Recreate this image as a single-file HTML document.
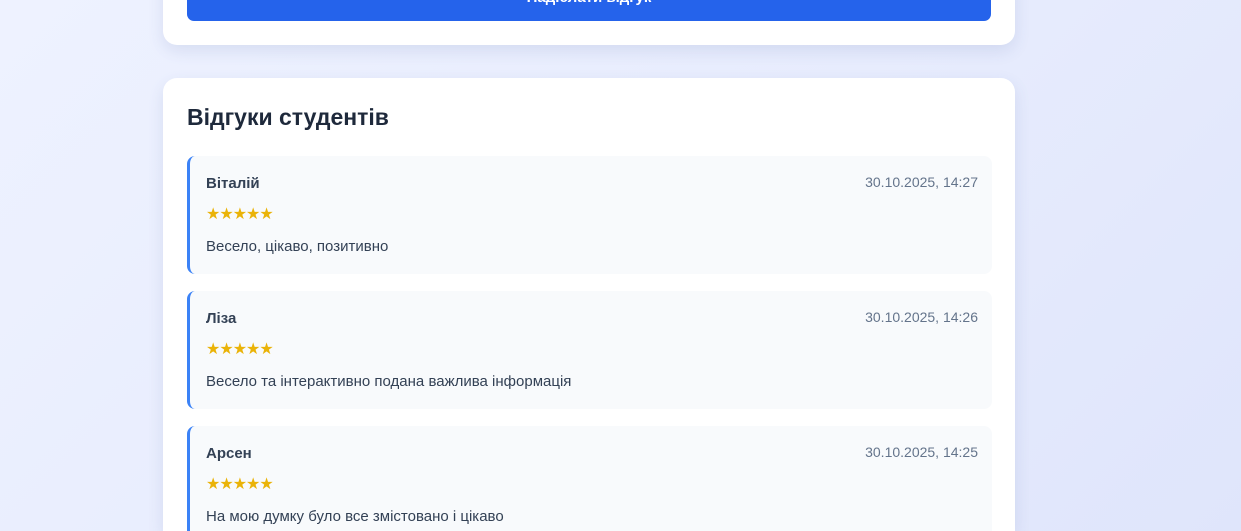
<!DOCTYPE html>
<html><head><meta charset="utf-8"><style>
*{box-sizing:border-box;margin:0;padding:0}
html,body{width:1241px;height:531px;overflow:hidden}
body{background:linear-gradient(135deg,#eef2ff 0%,#e6ebfd 60%,#dfe5fb 100%);font-family:"Liberation Sans","DejaVu Sans",sans-serif;position:relative}
.card{position:absolute;left:163px;width:852px;background:#fff;border-radius:14px;box-shadow:0 6px 16px rgba(60,80,150,.12)}
.c1{top:-40px;height:85px}
.btn{position:absolute;left:24px;right:24px;bottom:24px;height:40px;background:#2563eb;border-radius:7px;color:#fff;font-weight:bold;font-size:15px;text-align:center;line-height:20px;padding-top:7px;overflow:hidden}
.c2{top:78px;height:453px;border-radius:14px 14px 0 0}
h2{position:absolute;left:24px;top:26px;font-size:23px;font-weight:600;color:#1e293b}
.r{position:absolute;left:24px;width:805px;height:118px;background:#f8fafc;border-left:3px solid #3b82f6;border-radius:8px}
.n{position:absolute;left:16px;top:19px;font-size:15px;font-weight:bold;color:#334155}
.d{position:absolute;right:14px;top:18px;font-size:14px;color:#64748b}
.s{position:absolute;left:16px;top:48px;font-size:16px;color:#eab308;letter-spacing:-1px}
.t{position:absolute;left:16px;top:82px;font-size:15px;color:#334155}
</style></head><body>
<div class="card c1"><div class="btn">Надіслати відгук</div></div>
<div class="card c2">
<h2>Відгуки студентів</h2>
<div class="r" style="top:78px"><div class="n">Віталій</div><div class="d">30.10.2025, 14:27</div><div class="s">★★★★★</div><div class="t">Весело, цікаво, позитивно</div></div>
<div class="r" style="top:213px"><div class="n">Ліза</div><div class="d">30.10.2025, 14:26</div><div class="s">★★★★★</div><div class="t">Весело та інтерактивно подана важлива інформація</div></div>
<div class="r" style="top:348px;height:105px;border-radius:8px 8px 0 0"><div class="n">Арсен</div><div class="d">30.10.2025, 14:25</div><div class="s">★★★★★</div><div class="t">На мою думку було все змістовано і цікаво</div></div>
</div>
</body></html>
